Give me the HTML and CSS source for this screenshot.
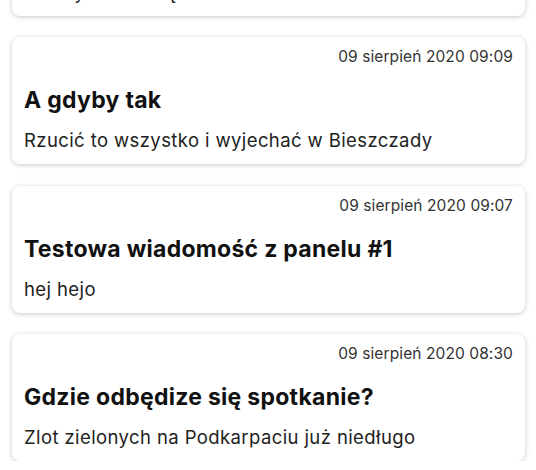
FILE: index.html
```html
<!DOCTYPE html>
<html lang="pl">
<head>
<meta charset="utf-8">
<link rel="stylesheet" href="styles.css">
</head>
<body>
<div class="feed">
  <div class="card">
    <div class="date">09 sierpień 2020 09:15</div>
    <div class="title">Zebranie</div>
    <div class="body">Ważny termin będzie w czwartek</div>
  </div>
  <div class="card">
    <div class="date">09 sierpień 2020 09:09</div>
    <div class="title">A gdyby tak</div>
    <div class="body">Rzucić to wszystko i wyjechać w Bieszczady</div>
  </div>
  <div class="card">
    <div class="date">09 sierpień 2020 09:07</div>
    <div class="title">Testowa wiadomość z panelu #1</div>
    <div class="body">hej hejo</div>
  </div>
  <div class="card">
    <div class="date">09 sierpień 2020 08:30</div>
    <div class="title">Gdzie odbędize się spotkanie?</div>
    <div class="body">Zlot zielonych na Podkarpaciu już niedługo</div>
  </div>
</div>
</body>
</html>
```
FILE: styles.css
```css
html, body {
  margin: 0;
  padding: 0;
  background: #ffffff;
  overflow: hidden;
}
body {
  font-family: Inter, "Noto Sans", sans-serif;
  color: #1a1a1a;
}
.feed {
  display: flex;
  flex-direction: column;
  gap: 21.5px;
  padding: 0 11px 0 12px;
  margin-top: -111.5px;
}
.card {
  background: #fff;
  border-radius: 8px;
  box-shadow: 0 1px 5px rgba(0, 0, 0, 0.22);
  padding: 10px 12px 12px 12px;
  display: flex;
  flex-direction: column;
}
.date {
  text-align: right;
  font-size: 15.5px;
  line-height: 20px;
  color: #333;
  letter-spacing: 0.1px;
}
.title {
  margin-top: 19px;
  font-size: 23px;
  line-height: 28px;
  font-weight: 700;
  color: #111;
  letter-spacing: 0.28px;
}
.body {
  margin-top: 14px;
  font-size: 18.5px;
  line-height: 24px;
  color: #222;
  letter-spacing: 0.4px;
}
```
